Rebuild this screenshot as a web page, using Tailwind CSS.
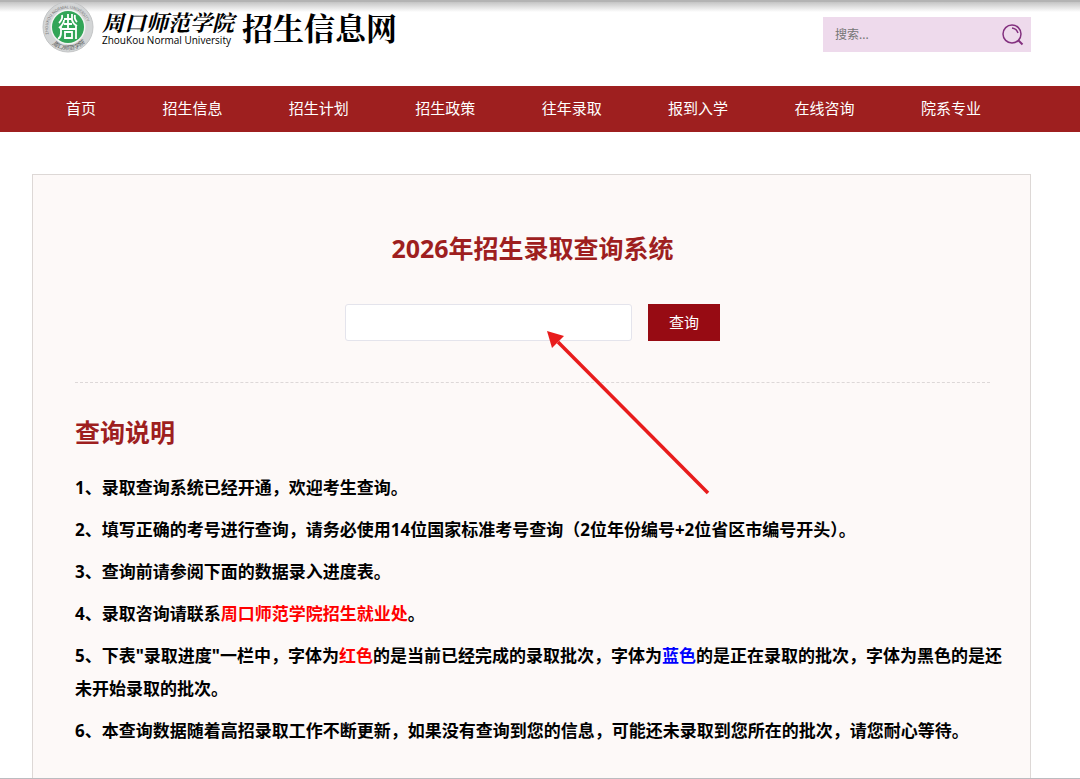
<!DOCTYPE html>
<html lang="zh-CN">
<head>
    <meta charset="UTF-8">
    <meta name="viewport" content="width=device-width, initial-scale=1.0">
    <title>周口师范学院招生信息网</title>
    <script src="https://cdn.jsdelivr.net/npm/@tailwindcss/browser@4"></script>
</head>
<body class="relative flex min-h-screen flex-col bg-white font-['Noto_Sans','Noto_Sans_CJK_SC',sans-serif] text-black">
    <!-- Header -->
    <header class="flex h-[86px] shrink-0 items-start justify-between border-t-2 border-[#b3b3b3] bg-linear-to-b from-[#c4c4c4] to-white to-12% pr-[49px] pl-[42px]">
        <a href="#" class="flex items-start">
            <svg class="h-[52px] w-[52px]" viewBox="0 0 52 52" aria-hidden="true">
                <defs>
                    <path id="ring-top" d="M7.500 34 A20 20 0 1 1 44.500 34"/>
                    <path id="ring-bottom" d="M7 38 A23 23 0 0 0 45 38"/>
                </defs>
                <circle cx="26" cy="25" r="25" fill="#d3d5d6" stroke="#c3c5c6"/>
                <circle cx="26" cy="25" r="17.500" fill="#f2f4f3"/>
                <circle cx="26" cy="25" r="16" fill="#32a557"/>
                <g fill="none" stroke="#fff" stroke-width="1.800">
                    <path d="M20 13 Q21 17 17 21 M22 18 Q22 22 17 26 M19 24 V31 Q19 35 16 37"/>
                    <path d="M33 13 Q32 17 35 20 M30 12 V18 Q31 22 35 24 M34 24 V37"/>
                    <path d="M26 12 V27 M22 17 H30 M22 22 H30 M20 27 H34"/>
                    <path d="M23 30 H30 V36 H23 Z"/>
                </g>
                <text font-size="4" fill="#777"><textPath href="#ring-top" startOffset="2">ZHOUKOU NORMAL UNIVERSITY</textPath></text>
                <text font-size="6" fill="#555" font-style="italic"><textPath href="#ring-bottom" startOffset="5">周口师范学院</textPath></text>
            </svg>
            <span class="ml-2 flex flex-col pt-2">
                <span class="font-['Noto_Serif_CJK_SC','Noto_Sans_CJK_SC',serif] text-[22px] leading-6 font-bold italic">周口师范学院</span>
                <span class="font-['Open_Sans',sans-serif] text-[10px] leading-3 font-medium">ZhouKou Normal University</span>
            </span>
            <span class="ml-2 pt-[7px] font-['Noto_Serif_CJK_SC','Noto_Sans_CJK_SC',serif] text-[31px] leading-9 font-bold">招生信息网</span>
        </a>
        <form class="mt-[15px] flex h-[35px] w-52 items-center bg-[#eedaec]">
            <input type="text" aria-label="搜索" placeholder="搜索..." class="min-w-0 flex-1 bg-transparent pl-3 text-xs text-[#666] outline-none placeholder:text-[#757575]">
            <button type="submit" aria-label="搜索" class="mr-1.5">
                <svg class="h-6 w-6" viewBox="0 0 24 24" fill="none" stroke="#83307f" stroke-width="1.500">
                    <circle cx="11" cy="11" r="9"/>
                    <path d="M11 5 Q15.500 5.500 17 10"/>
                    <path d="M17.500 17.500 L21.500 21.500" stroke-width="2"/>
                </svg>
            </button>
        </form>
    </header>

    <!-- Navigation -->
    <nav class="h-[46px] shrink-0 bg-[#9e1f1f] pr-[66px] pl-[33px] text-[15px] leading-[44px] text-white">
        <ul class="flex justify-between">
            <li><a href="#" class="block px-[33px]">首页</a></li>
            <li><a href="#" class="block px-[33px]">招生信息</a></li>
            <li><a href="#" class="block px-[33px]">招生计划</a></li>
            <li><a href="#" class="block px-[33px]">招生政策</a></li>
            <li><a href="#" class="block px-[33px]">往年录取</a></li>
            <li><a href="#" class="block px-[33px]">报到入学</a></li>
            <li><a href="#" class="block px-[33px]">在线咨询</a></li>
            <li><a href="#" class="block px-[33px]">院系专业</a></li>
        </ul>
    </nav>

    <!-- Query panel -->
    <main class="mt-[42px] mr-[49px] ml-8 flex-1 border border-b-0 border-[#ddd8d6] bg-[#fdf9f8] pt-[53px] pr-10 pl-[42px]">
        <h1 class="text-center text-[25px] leading-10 font-bold text-[#9e1f1f]">2026年招生录取查询系统</h1>
        <form class="mt-9 flex h-[37px] justify-center gap-4">
            <input type="text" aria-label="考号" class="w-[287px] rounded-[3px] border border-[#e4e4ec] bg-white px-3 text-[15px]">
            <button type="submit" class="w-[72px] bg-[#970b13] text-[15px] text-white">查询</button>
        </form>
        <hr class="mt-[41px] border-t border-dashed border-[#ddd8d8]">

        <h2 class="mt-[29px] text-[25px] leading-10 font-bold text-[#9e1f1f]">查询说明</h2>
        <div class="mt-[19px] -mr-6 space-y-[9px] text-[17px] leading-[33px] font-bold">
            <p>1、录取查询系统已经开通，欢迎考生查询。</p>
            <p>2、填写正确的考号进行查询，请务必使用14位国家标准考号查询（2位年份编号+2位省区市编号开头）。</p>
            <p>3、查询前请参阅下面的数据录入进度表。</p>
            <p>4、录取咨询请联系<a href="#" class="text-[#f00]">周口师范学院招生就业处</a>。</p>
            <p>5、下表"录取进度"一栏中，字体为<span class="text-[#f00]">红色</span>的是当前已经完成的录取批次，字体为<span class="text-[#00f]">蓝色</span>的是正在录取的批次，字体为黑色的是还未开始录取的批次。</p>
            <p>6、本查询数据随着高招录取工作不断更新，如果没有查询到您的信息，可能还未录取到您所在的批次，请您耐心等待。</p>
        </div>
    </main>
    <div class="h-px shrink-0 bg-[#bcbcc0]"></div>

    <!-- Arrow pointing at the exam number field -->
    <svg class="pointer-events-none absolute top-[330px] left-[546px] h-[165px] w-[164px]" viewBox="0 0 164 165" aria-hidden="true">
        <path d="M12 12 L162 163" stroke="#e81c1c" stroke-width="3.500"/>
        <path d="M1 1 L18 6 L6 18 Z" fill="#e81c1c"/>
    </svg>
</body>
</html>
